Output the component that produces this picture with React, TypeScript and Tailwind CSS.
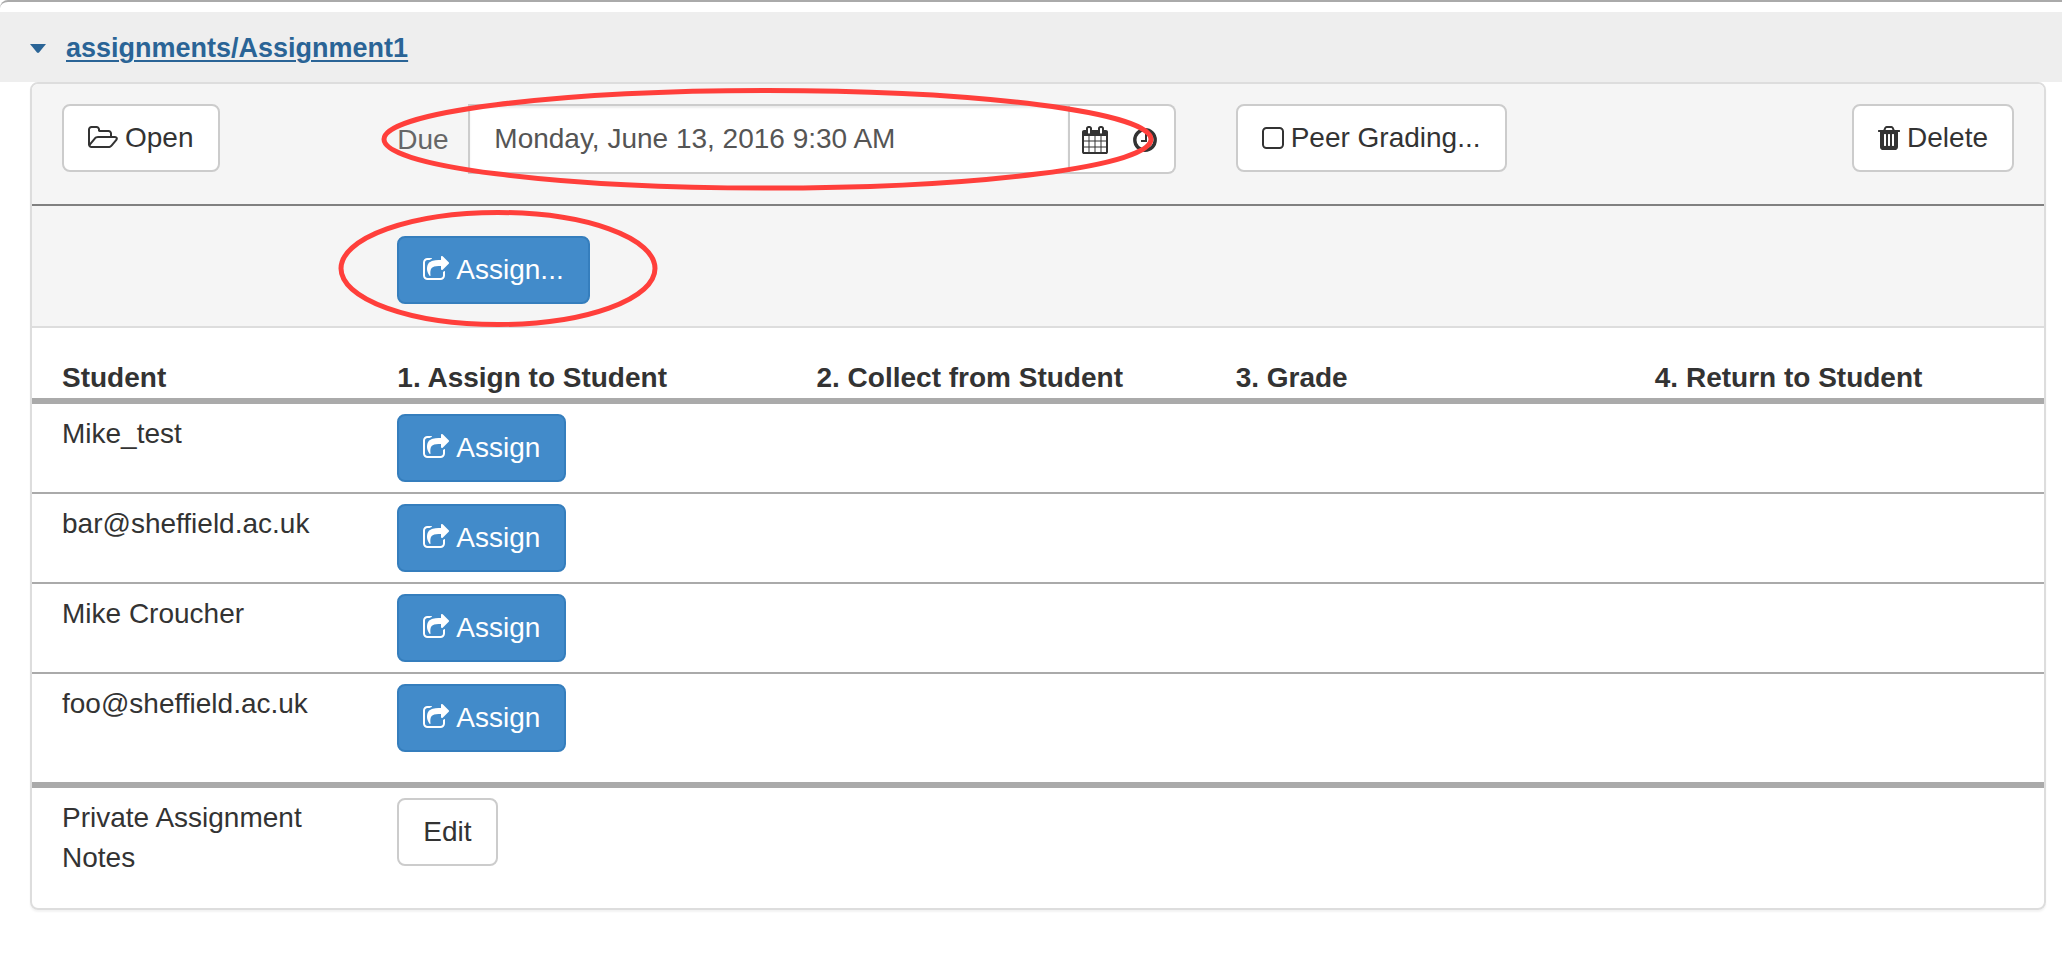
import type { ReactNode } from "react";

type IconProps = { viewBox: string; className: string; d: string };

function Glyph({ viewBox, className, d }: IconProps) {
  return (
    <svg viewBox={viewBox} className={className} fill="currentColor" aria-hidden="true">
      <path d={d} />
    </svg>
  );
}

const FOLDER =
  "M1781 803q0-35-53-35h-1088q-40 0-85.500 21.500t-71.500 52.500l-294 363q-18 24-18 40 0 35 53 35h1088q40 0 86-22t71-53l294-363q18-22 18-39zm-1141-163h768v-160q0-40-28-68t-68-28h-576q-40 0-68-28t-28-68v-64q0-40-28-68t-68-28h-320q-40 0-68 28t-28 68v853l256-315q44-53 116-87.500t140-34.500zm1269 163q0 62-46 120l-295 363q-43 53-116 87.500t-140 34.500h-1088q-92 0-158-66t-66-158v-960q0-92 66-158t158-66h320q92 0 158 66t66 158v32h544q92 0 158 66t66 158v160h192q54 0 99 24.500t67 70.500q15 32 15 68z";
const CALENDAR =
  "M128 1664h288v-288h-288v288zm352 0h320v-288h-320v288zm-352-352h288v-320h-288v320zm352 0h320v-320h-320v320zm-352-384h288v-288h-288v288zm736 736h320v-288h-320v288zm-384-736h320v-288h-320v288zm768 736h288v-288h-288v288zm-384-352h320v-320h-320v320zm-352-864v-288q0-13-9.500-22.500t-22.500-9.500h-64q-13 0-22.500 9.500t-9.500 22.500v288q0 13 9.500 22.500t22.500 9.500h64q13 0 22.500-9.500t9.500-22.500zm736 864h288v-320h-288v320zm-384-384h320v-288h-320v288zm384 0h288v-288h-288v288zm32-480v-288q0-13-9.500-22.500t-22.500-9.500h-64q-13 0-22.500 9.500t-9.500 22.500v288q0 13 9.500 22.500t22.500 9.500h64q13 0 22.500-9.500t9.500-22.500zm384-64v1280q0 52-38 90t-90 38h-1408q-52 0-90-38t-38-90v-1280q0-52 38-90t90-38h128v-96q0-66 47-113t113-47h64q66 0 113 47t47 113v96h384v-96q0-66 47-113t113-47h64q66 0 113 47t47 113v96h128q52 0 90 38t38 90z";
const SHARE =
  "M1472 989v259q0 119-84.500 203.500t-203.500 84.500h-832q-119 0-203.500-84.500t-84.500-203.500v-832q0-119 84.500-203.500t203.500-84.500h255q13 0 22.500 9.500t9.500 22.500q0 27-26 32-77 26-133 60-10 4-16 4h-112q-66 0-113 47t-47 113v832q0 66 47 113t113 47h832q66 0 113-47t47-113v-214q0-19 18-29 28-13 54-37 16-16 35-8 21 9 21 29zm237-496l-384 384q-18 19-45 19-12 0-25-5-39-17-39-59v-192h-160q-323 0-438 131-119 137-74 473 3 23-20 34-8 2-12 2-16 0-26-13-10-14-21-31t-39.500-68.500-49.500-99.500-38.500-114-17.500-122q0-49 3.500-91t14-90 28-88 47-81.500 68.500-74 94.500-61.500 124.500-48.500 159.500-30.500 196.500-11h160v-192q0-42 39-59 13-5 25-5 26 0 45 19l384 384q19 19 19 45t-19 45z";
const TRASH =
  "M704 1376v-704q0-14-9-23t-23-9h-64q-14 0-23 9t-9 23v704q0 14 9 23t23 9h64q14 0 23-9t9-23zm256 0v-704q0-14-9-23t-23-9h-64q-14 0-23 9t-9 23v704q0 14 9 23t23 9h64q14 0 23-9t9-23zm256 0v-704q0-14-9-23t-23-9h-64q-14 0-23 9t-9 23v704q0 14 9 23t23 9h64q14 0 23-9t9-23zm-544-992h448l-48-117q-7-9-17-11h-317q-10 2-17 11zm928 32v64q0 14-9 23t-23 9h-96v948q0 83-47 143.500t-113 60.500h-832q-66 0-113-58.500t-47-141.500v-952h-96q-14 0-23-9t-9-23v-64q0-14 9-23t23-9h309l70-167q15-37 54-63t79-26h320q40 0 79 26t54 63l70 167h309q14 0 23 9t9 23z";

function Button({ primary, children }: { primary?: boolean; children: ReactNode }) {
  return (
    <button
      type="button"
      className={
        primary
          ? "inline-flex h-[68px] items-center gap-[7px] rounded-lg border-2 border-[#357ebd] bg-[#428bca] px-6 whitespace-nowrap text-white"
          : "inline-flex h-[68px] items-center gap-[7px] rounded-lg border-2 border-[#ccc] bg-white px-6 whitespace-nowrap text-[#333]"
      }
    >
      {children}
    </button>
  );
}

function ShareIcon() {
  return <Glyph viewBox="64 0 1664 1792" className="h-7 w-[26px]" d={SHARE} />;
}

const students = ["Mike_test", "bar@sheffield.ac.uk", "Mike Croucher", "foo@sheffield.ac.uk"];
const steps = ["1. Assign to Student", "2. Collect from Student", "3. Grade", "4. Return to Student"];

export default function App() {
  return (
    <main className="relative min-h-screen bg-white font-['Liberation_Sans',Arial,sans-serif] text-[28px] leading-10 text-[#333]">
      <div className="h-3 rounded-tl-lg border-t-2 border-[#aaa]" />
      <header className="flex h-[70px] items-center gap-5 bg-[#eee] px-[30px] pt-[2px] text-[#2a6496]">
        <svg viewBox="0 0 16 9" className="h-[9px] w-4" fill="currentColor" aria-hidden="true">
          <path d="M0 0H16L9 8.500Q8 9.300 7 8.500Z" />
        </svg>
        <a href="#assignment1" className="text-[27px] font-bold underline decoration-2 underline-offset-3">
          assignments/Assignment1
        </a>
      </header>

      <section className="mr-4 ml-[30px] overflow-hidden rounded-lg border-2 border-[#ddd] shadow-[0_2px_2px_rgba(0,0,0,0.05)]">
        <div className="border-b-2 border-[#ddd] bg-[#f5f5f5]">
          <div className="grid h-[122px] grid-cols-[4fr_10fr_5fr_5fr] items-start border-b-2 border-[#808080] pt-5">
            <div className="px-[30px]">
              <Button>
                <Glyph viewBox="0 -128 1920 1792" className="h-7 w-[30px]" d={FOLDER} />
                Open
              </Button>
            </div>
            <div className="flex h-[70px] items-center px-[30px]">
              <label htmlFor="due" className="w-[71px] shrink-0 pt-[2px] text-[#666]">
                Due
              </label>
              <input
                id="due"
                type="text"
                defaultValue="Monday, June 13, 2016 9:30 AM"
                className="h-full min-w-0 flex-1 border-2 border-[#ccc] bg-white px-6 text-[#555] shadow-[inset_0_2px_2px_rgba(0,0,0,0.075)] outline-none"
              />
              <div className="flex h-full w-[106px] shrink-0 items-center gap-[25px] rounded-r-lg border-y-2 border-r-2 border-[#ccc] bg-white pt-[2px] pl-3">
                <button type="button" aria-label="Pick a date">
                  <Glyph viewBox="0 0 1664 1792" className="h-7 w-[26px]" d={CALENDAR} />
                </button>
                <button type="button" aria-label="Pick a time">
                  <svg viewBox="0 0 24 24" className="size-6" fill="none" stroke="currentColor" aria-hidden="true">
                    <circle cx="12" cy="12" r="10.200" strokeWidth="3.400" />
                    <path d="M13 6v7H8" strokeWidth="2" />
                  </svg>
                </button>
              </div>
            </div>
            <div className="px-[30px]">
              <Button>
                <svg viewBox="0 0 22 22" className="size-[22px]" fill="none" stroke="currentColor" aria-hidden="true">
                  <rect x="1" y="1" width="20" height="20" rx="3.500" strokeWidth="2" />
                </svg>
                Peer Grading...
              </Button>
            </div>
            <div className="flex justify-end px-[30px]">
              <Button>
                <Glyph viewBox="192 0 1408 1792" className="h-7 w-[22px]" d={TRASH} />
                Delete
              </Button>
            </div>
          </div>
          <div className="grid grid-cols-[4fr_20fr] pt-[30px] pb-[22px]">
            <div className="col-start-2 flex px-[30px]">
              <Button primary>
                <ShareIcon />
                Assign...
              </Button>
            </div>
          </div>
        </div>

        <table className="w-full table-fixed border-separate border-spacing-0 text-left">
          <thead>
            <tr>
              <th scope="col" className="w-1/6 border-b-[6px] border-[#aaa] px-[30px] pt-[30px] pb-0 font-bold">
                Student
              </th>
              {steps.map((step) => (
                <th
                  key={step}
                  scope="col"
                  className="border-b-[6px] border-[#aaa] px-[30px] pt-[30px] pb-0 font-bold whitespace-nowrap"
                >
                  {step}
                </th>
              ))}
            </tr>
          </thead>
          <tbody className="[&>tr:not(:last-child)>td]:border-b-2">
            {students.map((name) => (
              <tr key={name}>
                <td className="border-[#aaa] px-[30px] py-[10px] align-top">{name}</td>
                <td className="border-[#aaa] px-[30px] py-[10px] align-top">
                  <div className="flex">
                    <Button primary>
                      <ShareIcon />
                      Assign
                    </Button>
                  </div>
                </td>
                <td className="border-[#aaa]" />
                <td className="border-[#aaa]" />
                <td className="border-[#aaa]" />
              </tr>
            ))}
          </tbody>
        </table>

        <div className="mt-5 grid grid-cols-[4fr_20fr] border-t-[6px] border-[#aaa] pt-[10px] pb-[30px]">
          <div className="px-[30px]">Private Assignment Notes</div>
          <div className="flex items-start px-[30px]">
            <Button>Edit</Button>
          </div>
        </div>
      </section>

      <svg
        className="pointer-events-none absolute top-[86px] left-[336px] h-[244px] w-[820px]"
        viewBox="336 86 820 244"
        fill="none"
        stroke="#ff3f3b"
        strokeWidth="5"
        aria-hidden="true"
      >
        <ellipse cx="767.500" cy="139.300" rx="383.500" ry="48.800" />
        <ellipse cx="498" cy="268.500" rx="157" ry="56" />
      </svg>
    </main>
  );
}
